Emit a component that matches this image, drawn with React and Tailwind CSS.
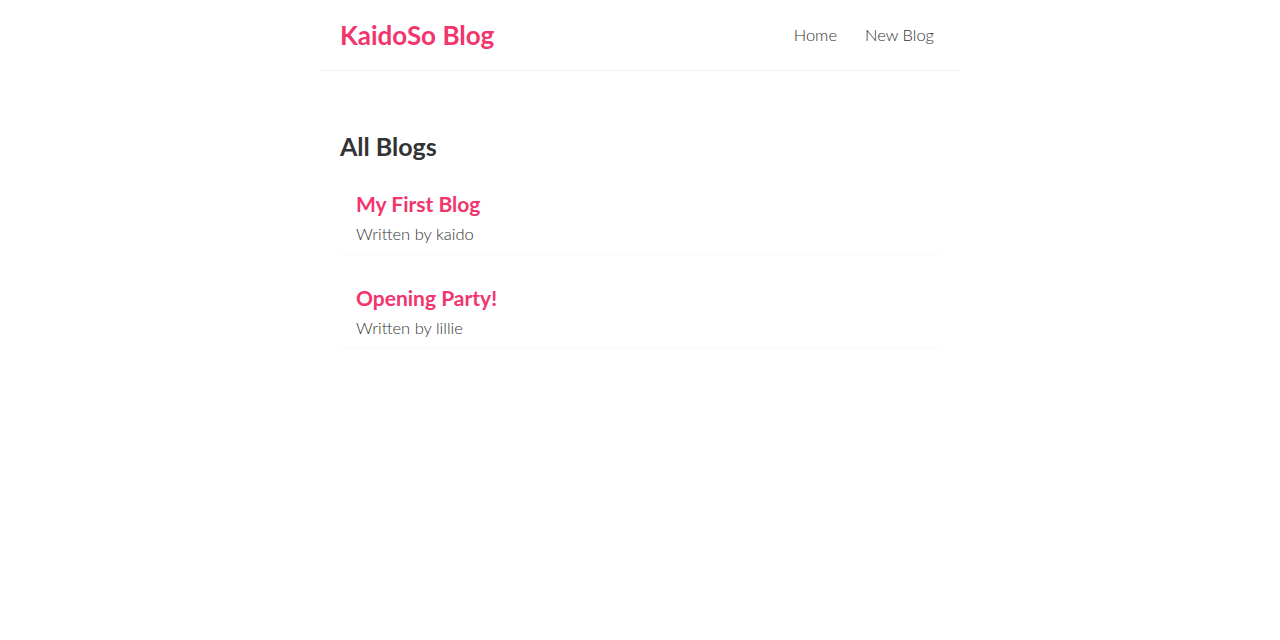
const blogs = [
  { id: 1, title: "My First Blog", author: "kaido" },
  { id: 2, title: "Opening Party!", author: "lillie" },
];

const Navbar = () => {
  return (
    <nav className="mx-auto flex w-[640px] items-center border-b border-[#f2f2f2] px-5 py-5">
      <h1 className="text-[26px] font-bold leading-[30px] text-[#f1356d]">KaidoSo Blog</h1>
      <div className="ml-auto flex">
        <a href="/" className="ml-4 px-1.5 text-[16.5px] font-light text-[#333]">
          Home
        </a>
        <a href="/create" className="ml-4 px-1.5 text-[16.5px] font-light text-[#333]">
          New Blog
        </a>
      </div>
    </nav>
  );
};

const BlogList = ({ blogs, title }) => {
  return (
    <div>
      <h2 className="text-[25px] font-bold leading-[30px] text-[#333]">{title}</h2>
      {blogs.map((blog) => (
        <div key={blog.id} className="my-[21px] border-b border-[#fafafa] px-4 py-2.5">
          <h2 className="mb-2 text-[21px] font-bold leading-[24px] text-[#f1356d]">{blog.title}</h2>
          <p className="text-[16.5px] font-light leading-[20px] text-[#333]">Written by {blog.author}</p>
        </div>
      ))}
    </div>
  );
};

export default function App() {
  return (
    <div className="min-h-[640px] bg-white font-['Lato',sans-serif]">
      <Navbar />
      <div className="mx-auto my-10 w-[640px] p-5">
        <BlogList blogs={blogs} title="All Blogs" />
      </div>
    </div>
  );
}
